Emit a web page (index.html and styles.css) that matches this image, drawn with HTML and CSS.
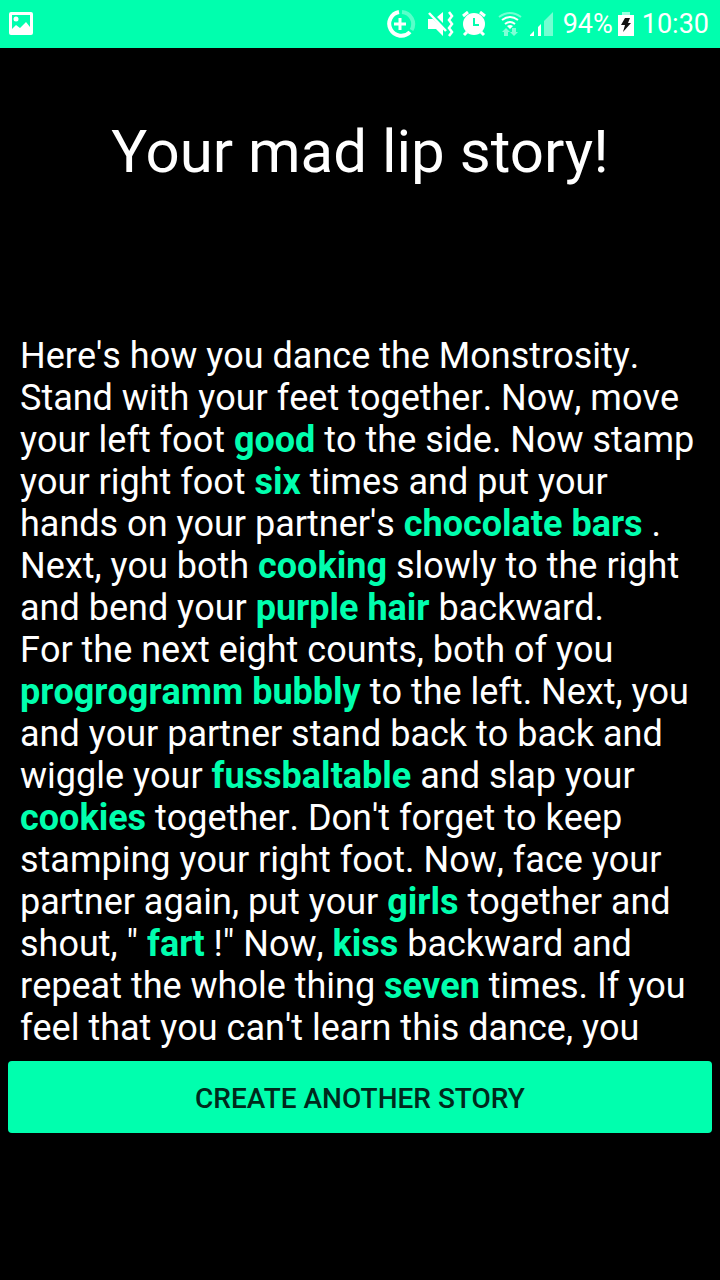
FILE: index.html
```
<!DOCTYPE html>
<html lang="en">
<head>
<meta charset="utf-8">
<meta name="viewport" content="width=device-width, initial-scale=1">
<title>Your mad lip story!</title>
<link rel="stylesheet" href="styles.css">
</head>
<body>
<div class="screen">
  <header class="status">
    <svg class="photo" width="24" height="24" viewBox="0 0 24 24" aria-hidden="true">
      <path fill="#fff" fill-rule="evenodd" d="M2 0h20a2 2 0 0 1 2 2v19a2 2 0 0 1-2 2H2a2 2 0 0 1-2-2V2a2 2 0 0 1 2-2zM3 3v14l4-4 4 3 6-6 4 5V3z"/>
      <circle cx="7" cy="7" r="2.500" fill="#fff"/>
    </svg>
    <div class="indicators">
      <svg class="saver" width="30" height="30" viewBox="0 0 30 30" fill="none" stroke="#fff" aria-hidden="true">
        <path stroke-width="4" opacity=".35" d="M16 3a12 12 0 0 1 9.500 18"/>
        <path stroke-width="4" d="M13 3a12 12 0 1 0 11 20"/>
        <path stroke-width="3" d="M14 9v12M8 15h12"/>
      </svg>
      <svg class="mute" width="27" height="26" viewBox="0 0 27 26" aria-hidden="true">
        <path fill="#fff" d="M1 8h5l10 9v8l-7-7H1zM10 6l6-5v11z"/>
        <path stroke="#fff" stroke-width="2.500" fill="none" d="M2 2l17 18"/>
        <path stroke="#fff" stroke-width="2.500" fill="none" d="M22 1l3 4-3 4 3 4-3 4 3 4-3 4"/>
      </svg>
      <svg class="alarm" width="24" height="26" viewBox="0 0 24 26" aria-hidden="true">
        <circle cx="12" cy="13" r="11" fill="#fff"/>
        <path stroke="#fff" stroke-width="3" d="M1 5l5-4M18 1l5 4M5 21l-3 3M19 21l3 3"/>
        <path stroke="#00ffae" stroke-width="2" fill="none" d="M12 7v7h5"/>
      </svg>
      <svg class="wifi" width="24" height="26" viewBox="0 0 24 26" fill="none" stroke="#fff" stroke-width="2" aria-hidden="true">
        <path opacity=".45" d="M1 6q11-8 22 0"/>
        <path d="M4 9q8-6 16 0M7 13q5-4 10 0"/>
        <path fill="#fff" stroke="none" d="M9 15q3-2 6 0l-3 3z"/>
        <path fill="#fff" stroke="none" opacity=".5" d="M8 17l4 4h-2v4H6v-4H4zM16 25l-4-4h2v-4h4v4h2z"/>
      </svg>
      <svg class="signal" width="24" height="24" viewBox="0 0 24 24" fill="#fff" aria-hidden="true">
        <path d="M0 24v-1l4-4v5zM8 24v-9l3-3v12z"/>
        <path opacity=".45" d="M14 24V9l9-9v24z"/>
      </svg>
      <span class="percent">94%</span>
      <svg class="battery" width="16" height="24" viewBox="0 0 16 24" aria-hidden="true">
        <path fill="#fff" opacity=".6" d="M4 0h8v3H4z"/>
        <path fill="#fff" d="M0 3h16v21H0z"/>
        <path fill="#111" d="M7 6h5l-2 5h3L5 20l2-7H3z"/>
      </svg>
      <time class="clock">10:30</time>
    </div>
  </header>
  <main class="content">
    <h1 class="title">Your mad lip story!</h1>
    <p class="story">Here's how you dance the Monstrosity. Stand with your feet together. Now, move your left foot <b class="word">good</b> to the side. Now stamp your right foot <b class="word">six</b> times and put your hands on your partner's <b class="word">chocolate bars</b> . Next, you both <b class="word">cooking</b> slowly to the right and bend your <b class="word">purple hair</b> backward.<br>For the next eight counts, both of you <b class="word">progrogramm bubbly</b> to the left. Next, you and your partner stand back to back and wiggle your <b class="word">fussbaltable</b> and slap your <b class="word">cookies</b> together. Don't forget to keep stamping your right foot. Now, face your partner again, put your <b class="word">girls</b> together and shout, " <b class="word">fart</b> !" Now, <b class="word">kiss</b> backward and repeat the whole thing <b class="word">seven</b> times. If you feel that you can't learn this dance, you</p>
    <button class="again" type="button">CREATE ANOTHER STORY</button>
  </main>
</div>
</body>
</html>
```
FILE: styles.css
```
* {
  box-sizing: border-box;
}

body {
  margin: 0;
  background: #000;
  color: #fff;
  font-family: Roboto, "Liberation Sans", sans-serif;
}

.screen {
  min-height: 100vh;
}

.status {
  display: flex;
  align-items: center;
  justify-content: space-between;
  height: 48px;
  padding: 0 11px 0 9px;
  background: #00ffae;
  font-size: 27px;
  line-height: 48px;
}

.indicators {
  display: flex;
  align-items: center;
}

.saver {
  margin-right: 11px;
}

.mute {
  margin-right: 8px;
}

.alarm {
  margin-right: 12px;
}

.wifi {
  margin-right: 8px;
}

.signal {
  margin-right: 9px;
}

.percent {
  margin-right: 5px;
}

.battery {
  margin-right: 8px;
}

.content {
  display: flex;
  flex-direction: column;
  padding: 69px 8px 0;
}

.title {
  margin: 0;
  font-size: 60px;
  font-weight: 400;
  line-height: 70px;
  text-align: center;
}

.story {
  margin: 148px 0 12px;
  padding: 0 4px 0 12px;
  font-size: 36px;
  font-kerning: none;
  line-height: 42px;
}

.word {
  color: #00ffae;
  font-weight: 700;
}

.again {
  height: 72px;
  padding: 4px 0 0;
  border: 0;
  border-radius: 4px;
  background: #00ffae;
  color: #00291c;
  font-family: inherit;
  font-size: 28px;
  font-weight: 500;
  line-height: 32px;
}
```
